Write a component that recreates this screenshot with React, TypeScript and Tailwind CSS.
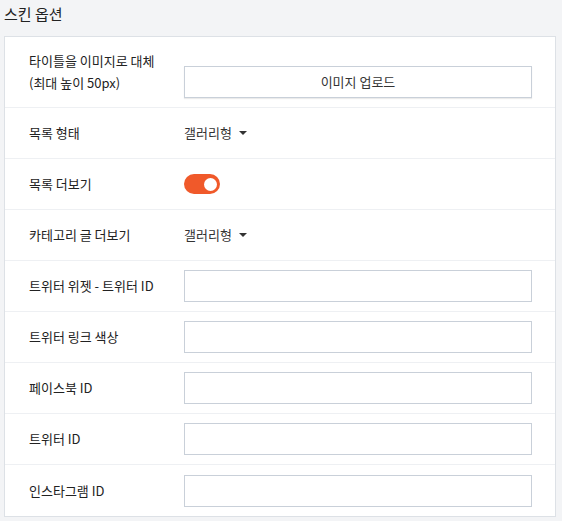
import { useState } from "react";

const font = { fontFamily: '"Noto Sans CJK KR", "Noto Sans", sans-serif' };

function TextInput() {
  return <input type="text" className="h-8 w-[348px] border border-[#c9d0d9] bg-white px-2 text-[13px] outline-none" />;
}

function Dropdown({ value }: { value: string }) {
  return (
    <button className="flex items-center gap-[7px] text-[13px] text-[#333]">
      {value}
      <span className="h-0 w-0 border-x-[4px] border-t-[4px] border-x-transparent border-t-[#333]" />
    </button>
  );
}

function Row({ label, children, tall }: { label: React.ReactNode; children: React.ReactNode; tall?: boolean }) {
  return (
    <div className={`flex items-center border-b border-[#eef0f3] last:border-b-0 ${tall ? "h-[71px]" : "h-[51px]"}`}>
      <div className="w-[179px] shrink-0 pl-6 text-[13px] leading-[22px] text-[#222]">{label}</div>
      <div className="flex items-center">{children}</div>
    </div>
  );
}

export default function App() {
  const [more, setMore] = useState(true);

  return (
    <div className="min-h-screen bg-[#f3f4f6] px-1 pt-[3px]" style={font}>
      <h2 className="mb-[11px] text-[15px] leading-[22px] text-[#222]">스킨 옵션</h2>

      <div className="w-[552px] border border-[#dde1e6] bg-white">
        <Row
          tall
          label={
            <>
              타이틀을 이미지로 대체
              <br />
              (최대 높이 50px)
            </>
          }
        >
          <button className="mt-[20px] h-8 w-[348px] border border-[#c9d0d9] bg-white text-[13px] text-[#333] shadow-[0_1px_1px_rgba(0,0,0,0.08)]">
            이미지 업로드
          </button>
        </Row>
        <Row label="목록 형태">
          <Dropdown value="갤러리형" />
        </Row>
        <Row label="목록 더보기">
          <button
            onClick={() => setMore(!more)}
            className={`flex h-5 w-9 items-center rounded-full px-[3px] ${more ? "justify-end bg-[#f0592a]" : "justify-start bg-[#ccc]"}`}
          >
            <span className="h-[13px] w-[13px] rounded-full bg-white" />
          </button>
        </Row>
        <Row label="카테고리 글 더보기">
          <Dropdown value="갤러리형" />
        </Row>
        <Row label="트위터 위젯 - 트위터 ID">
          <TextInput />
        </Row>
        <Row label="트위터 링크 색상">
          <TextInput />
        </Row>
        <Row label="페이스북 ID">
          <TextInput />
        </Row>
        <Row label="트위터 ID">
          <TextInput />
        </Row>
        <Row label="인스타그램 ID">
          <TextInput />
        </Row>
      </div>
    </div>
  );
}
